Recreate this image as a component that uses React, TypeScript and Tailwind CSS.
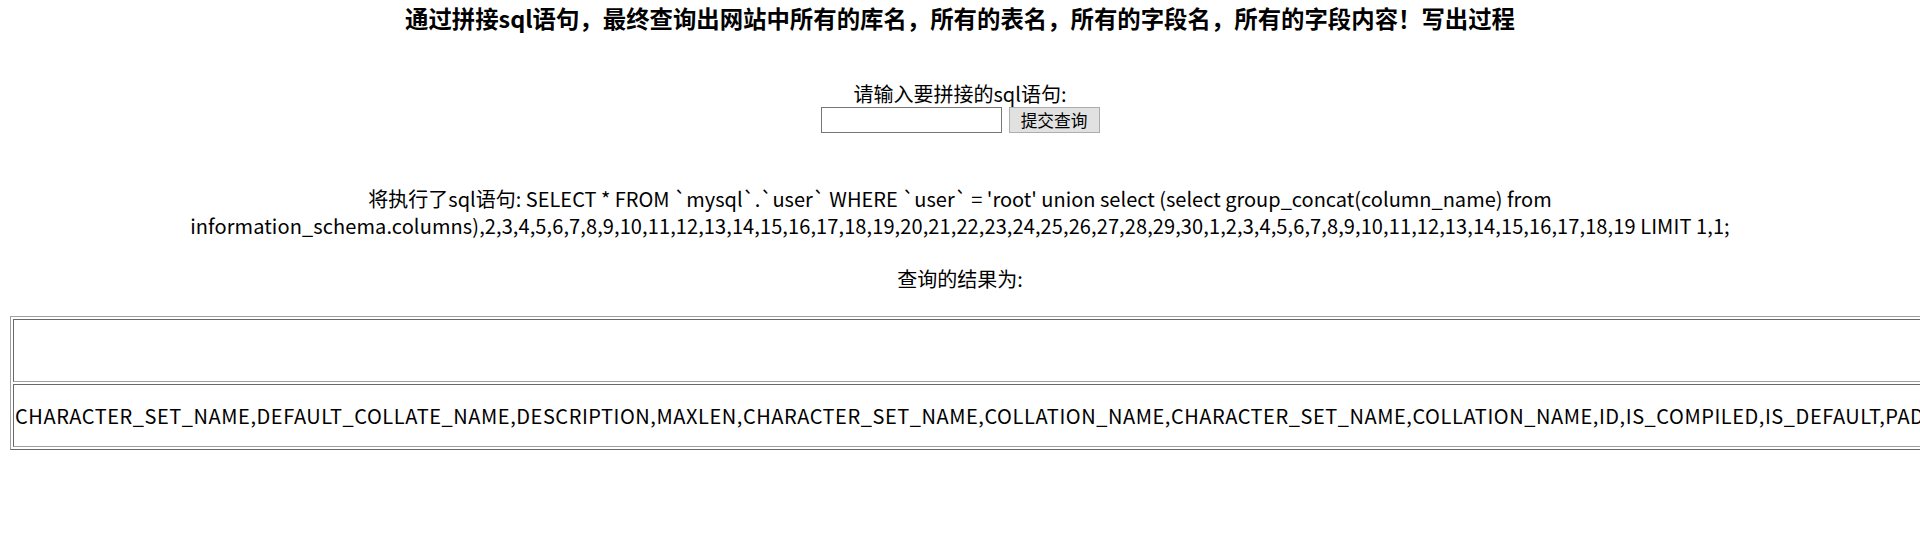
import React from "react";

const sqlLine1 =
  "将执行了sql语句: SELECT * FROM `mysql`.`user` WHERE `user` = 'root' union select (select group_concat(column_name) from";
const sqlLine2 =
  "information_schema.columns),2,3,4,5,6,7,8,9,10,11,12,13,14,15,16,17,18,19,20,21,22,23,24,25,26,27,28,29,30,1,2,3,4,5,6,7,8,9,10,11,12,13,14,15,16,17,18,19 LIMIT 1,1;";
const result =
  "CHARACTER_SET_NAME,DEFAULT_COLLATE_NAME,DESCRIPTION,MAXLEN,CHARACTER_SET_NAME,COLLATION_NAME,CHARACTER_SET_NAME,COLLATION_NAME,ID,IS_COMPILED,IS_DEFAULT,PAD_ATTRIBUTE,SORTLEN,COLLATION_NAME,CHARACTER_SET_NAME";

const App = () => {
  return (
    <div
      className="w-full overflow-hidden bg-white text-black text-[20px] leading-[27px]"
      style={{ fontFamily: '"Noto Sans CJK SC", "Noto Sans", sans-serif' }}
    >
      {/* title */}
      <h3 className="pt-[2px] text-center text-[23.4px] font-bold leading-[32px]">
        通过拼接sql语句，最终查询出网站中所有的库名，所有的表名，所有的字段名，所有的字段内容！写出过程
      </h3>

      {/* form */}
      <div className="mt-[46px] flex flex-col items-center">
        <p>请输入要拼接的sql语句:</p>
        <div className="flex items-center gap-[7px]">
          <input
            type="text"
            className="h-[26px] w-[181px] border border-[#767676] bg-white px-1 text-[16px]"
          />
          <button className="flex h-[26px] w-[91px] items-center justify-center border border-[#adadad] bg-[#e1e1e1] text-[16.7px] leading-none">
            提交查询
          </button>
        </div>
      </div>

      {/* executed statement */}
      <div className="mt-[52px] px-[10px] text-center">
        <p>{sqlLine1}</p>
        <p className="tracking-[0.1px]">{sqlLine2}</p>
        <p className="mt-[26px]">查询的结果为:</p>
      </div>

      {/* result table */}
      <div className="mt-[24px] ml-[10px] mb-[100px] inline-flex flex-col gap-[2px] border border-t-[#a0a0a0] border-l-[#a0a0a0] border-r-[#696969] border-b-[#696969] p-[2px]">
        <div className="h-[63px] border border-t-[#696969] border-l-[#696969] border-r-[#a0a0a0] border-b-[#a0a0a0]" />
        <div className="flex h-[63px] items-center whitespace-nowrap border border-t-[#696969] border-l-[#696969] border-r-[#a0a0a0] border-b-[#a0a0a0] px-[1px] tracking-[0.55px]">
          {result}
        </div>
      </div>
    </div>
  );
};

export default App;
